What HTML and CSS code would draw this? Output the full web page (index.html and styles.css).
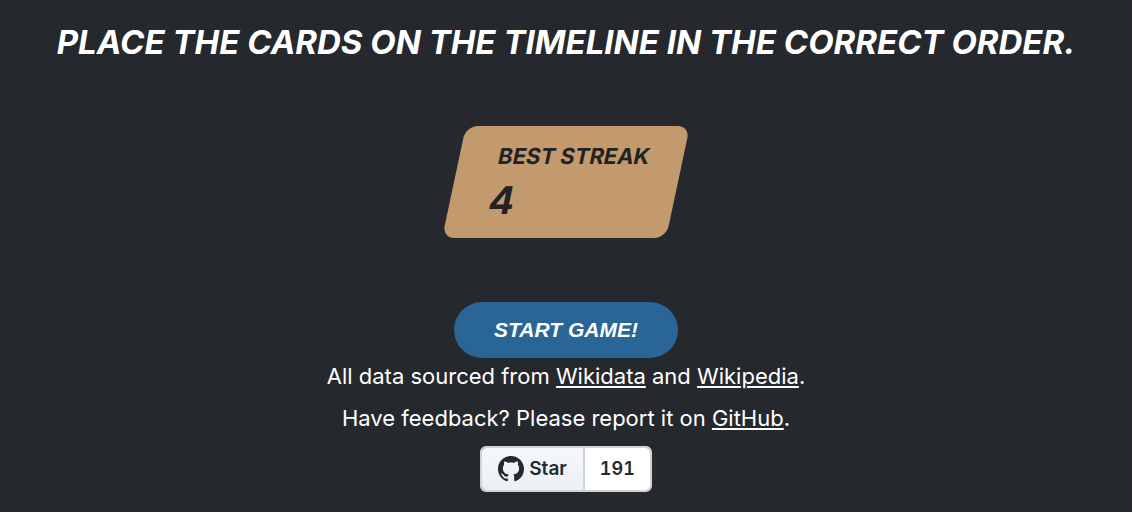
FILE: index.html
```html
<!DOCTYPE html>
<html lang="en">
<head>
<meta charset="utf-8">
<meta name="viewport" content="width=device-width, initial-scale=1">
<title>Timeline game</title>
<link rel="stylesheet" href="styles.css">
</head>
<body>
<main class="page">
  <h1 class="title">Place the cards on the timeline in the correct order.</h1>
  <section class="score">
    <h2 class="score-label">Best streak</h2>
    <p class="score-value">4</p>
  </section>
  <button class="start" type="button">Start game!</button>
  <p class="about">All data sourced from <a href="#">Wikidata</a> and <a href="#">Wikipedia</a>.</p>
  <p class="about">Have feedback? Please report it on <a href="#">GitHub</a>.</p>
  <div class="github">
    <a class="github-star" href="#">
      <svg class="github-icon" viewBox="0 0 26 26" aria-hidden="true"><path fill="currentColor" d="M13 0C5.800 0 0 5.800 0 13c0 5.700 3.700 10.600 8.900 12.300.7.100 1-.3 1-.7v-2.200c-3.400.6-4.700-.8-5.300-2.200-.4-.9-.8-1.400-1.500-1.900-.5-.4-.3-.7.3-.7 1.100 0 1.800.8 2.400 1.600 1.100 1.600 2.500 1.700 4.200 1.100.1-.8.400-1.300.8-1.700-3.500-.4-5.900-2.200-5.900-6.300 0-1.500.5-2.700 1.300-3.600-.3-.9-.3-2.200.1-3.200 1.300 0 2.400.5 3.700 1.400 2-.4 4-.4 6 0 1.300-.9 2.400-1.400 3.700-1.400.4 1 .4 2.300.1 3.200.8.9 1.300 2.100 1.300 3.600 0 4.100-2.400 5.900-5.900 6.300.6.500 1 1.400 1 2.700v3.300c0 .4.300.8 1 .7C22.300 23.600 26 18.700 26 13 26 5.800 20.200 0 13 0z"/></svg>
      <span>Star</span>
    </a><a class="github-count" href="#">191</a>
  </div>
</main>
</body>
</html>
```
FILE: styles.css
```css
* {
  box-sizing: border-box;
}

body {
  margin: 0;
  background: #25282d;
  color: #fff;
  font-family: Inter, "Liberation Sans", sans-serif;
}

.page {
  display: flex;
  flex-direction: column;
  align-items: center;
  padding: 22px 16px 20px;
}

.title {
  margin: 0 0 64px;
  font-size: 33px;
  line-height: 40px;
  font-style: italic;
  font-weight: 700;
  text-transform: uppercase;
  text-align: center;
}

.score {
  width: 224px;
  margin-bottom: 64px;
  padding: 16px 16px 14px 39px;
  border-radius: 12px;
  background: #c29a6e;
  color: #222;
  transform: skewX(-12deg);
}

.score-label,
.score-value {
  margin: 0;
  font-weight: 700;
  text-transform: uppercase;
}

.score-label {
  margin-bottom: 7px;
  font-size: 22px;
  line-height: 28px;
}

.score-value {
  font-size: 38px;
  line-height: 47px;
}

.start {
  width: 224px;
  height: 56px;
  border: 0;
  border-radius: 28px;
  background: #296596;
  color: #fff;
  font-family: "Liberation Sans", Arial, sans-serif;
  font-size: 21px;
  font-style: italic;
  font-weight: 700;
  text-transform: uppercase;
}

.about {
  margin: 4px 0 10px;
  font-size: 22px;
  line-height: 28px;
  text-align: center;
}

.about a {
  color: inherit;
  text-decoration-thickness: 2px;
  text-underline-offset: 2px;
}

.github {
  display: flex;
  margin-top: 4px;
  border: 2px solid #d0d3d7;
  border-radius: 6px;
  color: #24292f;
  font-size: 19px;
  font-weight: 600;
  line-height: 42px;
  overflow: hidden;
}

.github a {
  color: inherit;
  text-decoration: none;
}

.github-star {
  display: flex;
  align-items: center;
  gap: 5px;
  padding: 0 16px;
  background: linear-gradient(#f6f8fa, #ebf0f4);
}

.github-icon {
  width: 26px;
  height: 26px;
}

.github-count {
  padding: 0 15px;
  border-left: 2px solid #d0d3d7;
  background: #fff;
  font-size: 18px;
  font-variant-numeric: tabular-nums;
}
```
